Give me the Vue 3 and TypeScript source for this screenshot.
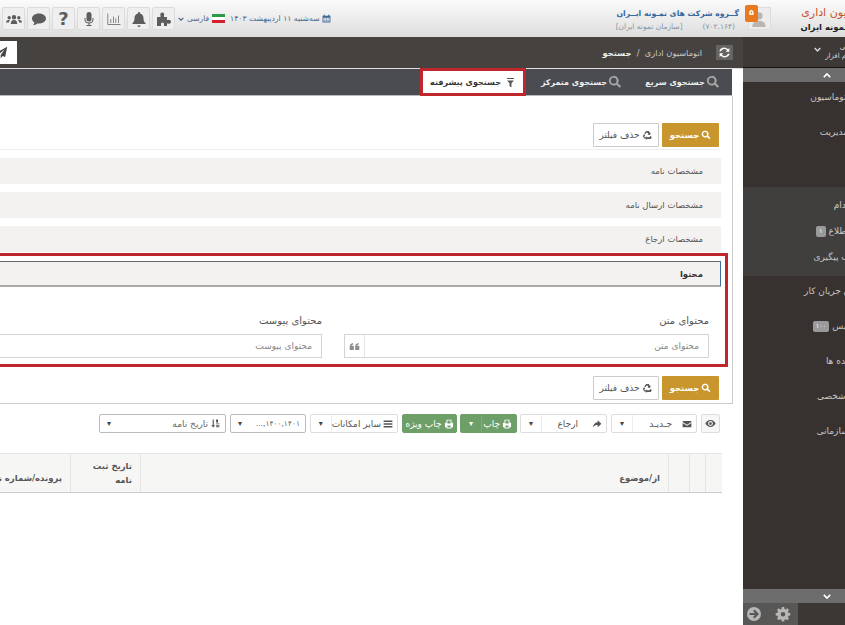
<template>
  <div class="page">
    <!-- Top header -->
    <header class="header">
      <div class="brand">
        <div class="brand-title">اتوماسیون اداری</div>
        <div class="brand-sub">گروه نمونه ایران</div>
      </div>
      <div class="avatar">
        <svg viewBox="0 0 16 16"><path :d="icons.user" /></svg>
        <span class="avatar-badge">۵</span>
      </div>
      <div class="company">
        <div class="company-name">گــروه شرکت های نمـونه ایــران</div>
        <div class="company-sub"><span>(۷۰۲.۱۶۴)</span><span>[سازمان نمونه ایران]</span></div>
      </div>
      <div class="header-left">
        <div class="date">
          <svg viewBox="0 0 16 16"><path :d="icons.calendar" /></svg>
          <span>سه‌شنبه ۱۱ اردیبهشت ۱۴۰۳</span>
        </div>
        <div class="flag"><i></i><i></i><i></i></div>
        <span class="lang">فارسی</span>
        <svg class="lang-caret" viewBox="0 0 10 6"><path d="M1 1l4 4 4-4" /></svg>
        <div class="tools">
          <button v-for="t in headerTools" :key="t" class="tool">
            <span v-if="t === 'question'" class="tool-q">?</span>
            <svg v-else viewBox="0 0 16 16"><path :d="icons[t]" /></svg>
          </button>
        </div>
      </div>
    </header>

    <div class="body">
      <!-- Sidebar -->
      <aside class="sidebar">
        <div class="side-top">
          <svg viewBox="0 0 10 6"><path d="M1 1l4 4 4-4" /></svg>
          <div class="side-user">
            <div>علی</div>
            <div>نرم افزار</div>
          </div>
        </div>
        <div class="side-scroll"><svg viewBox="0 0 10 6"><path d="M1 5l4-4 4 4" /></svg></div>
        <div class="side-group side-first">
          <div v-for="m in menuA" :key="m.label" class="side-row" :style="{ marginRight: -m.clip + 'px' }">{{ m.label }}</div>
        </div>
        <div class="side-group side-sub">
          <div v-for="m in menuB" :key="m.label" class="side-row side-row-sub" :style="{ marginRight: -m.clip + 'px' }">
            {{ m.label }}<span v-if="m.badge" class="side-badge">{{ m.badge }}</span>
          </div>
        </div>
        <div class="side-group side-last">
          <div v-for="m in menuC" :key="m.label" class="side-row" :style="{ marginRight: -m.clip + 'px' }">
            {{ m.label }}<span v-if="m.badge" class="side-badge">{{ m.badge }}</span>
          </div>
        </div>
        <div class="side-scroll"><svg viewBox="0 0 10 6"><path d="M1 1l4 4 4-4" /></svg></div>
        <div class="side-foot">
          <div class="foot-box">
            <svg viewBox="0 0 16 16"><path :d="icons.gear" /></svg>
            <svg viewBox="0 0 16 16"><path :d="icons.arrow" fill-rule="evenodd" /></svg>
          </div>
        </div>
      </aside>

      <main class="main">
        <div class="topbar">
          <div class="refresh"><svg viewBox="0 0 16 16"><path :d="icons.refresh" /></svg></div>
          <div class="crumbs">اتوماسیون اداری &nbsp;/&nbsp; <b>جستجو</b></div>
          <button class="send"><svg viewBox="0 0 16 16"><path :d="icons.plane" /></svg></button>
        </div>

        <nav class="tabs">
          <div class="tab tab-1"><svg viewBox="0 0 16 16"><path :d="icons.search" fill-rule="evenodd" /></svg>جستجوی سریع</div>
          <div class="tab tab-2"><svg viewBox="0 0 16 16"><path :d="icons.search" fill-rule="evenodd" /></svg>جستجوی متمرکز</div>
          <div class="tab tab-active"><svg viewBox="0 0 16 16"><path :d="icons.filter" /></svg>جستجوی پیشرفته</div>
        </nav>

        <section class="panel">
          <div class="actions actions-top">
            <button class="btn-search"><svg viewBox="0 0 16 16"><path :d="icons.search" fill-rule="evenodd" /></svg>جستجو</button>
            <button class="btn-clear"><svg viewBox="0 0 16 16"><path :d="icons.recycle" /></svg>حذف فیلتر</button>
          </div>

          <div class="accordion">
            <div v-for="r in sections" :key="r" class="acc-row">{{ r }}</div>
          </div>

          <div class="highlight">
            <div class="content-head">محتوا</div>
            <div class="fields">
              <div class="field">
                <label>محتوای متن</label>
                <div class="input">
                  <span class="ph">محتوای متن</span>
                  <span class="quote"><svg viewBox="0 0 16 16"><path :d="icons.quote" /></svg></span>
                </div>
              </div>
              <div class="field">
                <label>محتوای پیوست</label>
                <div class="input"><span class="ph">محتوای پیوست</span></div>
              </div>
            </div>
          </div>

          <div class="actions actions-bottom">
            <button class="btn-search"><svg viewBox="0 0 16 16"><path :d="icons.search" fill-rule="evenodd" /></svg>جستجو</button>
            <button class="btn-clear"><svg viewBox="0 0 16 16"><path :d="icons.recycle" /></svg>حذف فیلتر</button>
          </div>
        </section>

        <div class="toolbar">
          <button class="tb tb-eye"><svg viewBox="0 0 16 16"><path :d="icons.eye" fill-rule="evenodd" /></svg></button>
          <div class="tb tb-split tb-new">
            <span class="tb-main"><svg viewBox="0 0 16 16"><path :d="icons.mail" /></svg><em>جـدیـد</em></span>
            <span class="tb-caret">▾</span>
          </div>
          <div class="tb tb-split tb-refer">
            <span class="tb-main"><svg viewBox="0 0 16 16"><path :d="icons.share" /></svg><em>ارجاع</em></span>
            <span class="tb-caret">▾</span>
          </div>
          <div class="tb tb-split tb-green tb-print">
            <span class="tb-main"><svg viewBox="0 0 16 16"><path :d="icons.print" fill-rule="evenodd" /></svg>چاپ</span>
            <span class="tb-caret">▾</span>
          </div>
          <div class="tb tb-green tb-special">
            <svg viewBox="0 0 16 16"><path :d="icons.print" fill-rule="evenodd" /></svg>چاپ ویژه
          </div>
          <div class="tb tb-split tb-more">
            <span class="tb-main"><svg viewBox="0 0 16 16"><path :d="icons.bars" /></svg>سایر امکانات</span>
            <span class="tb-caret">▾</span>
          </div>
          <div class="tb tb-select tb-years">
            <span>۱۴۰۰,۱۴۰۱,...</span><span class="tb-arrow">▾</span>
          </div>
          <div class="tb tb-select tb-date">
            <span class="tb-date-label"><svg viewBox="0 0 16 16"><path :d="icons.sort" /></svg>تاریخ نامه</span><span class="tb-arrow">▾</span>
          </div>
        </div>

        <div class="table-head">
          <div class="th th-a"></div>
          <div class="th th-b"></div>
          <div class="th th-c"></div>
          <div class="th th-subject">از/موضوع</div>
          <div class="th th-date">تاریخ ثبت<br />نامه</div>
          <div class="th th-file">پرونده/شماره نامه</div>
        </div>
      </main>
    </div>
  </div>
</template>

<script setup lang="ts">
interface MenuItem {
  label: string
  clip: number
  badge?: string
}

const icons: Record<string, string> = {
  search: 'M6.5 1a5.5 5.5 0 1 0 3.2 10l3.5 3.7 1.9-1.9-3.7-3.5A5.5 5.5 0 0 0 6.5 1zm0 2.2a3.3 3.3 0 1 1 0 6.6 3.3 3.3 0 0 1 0-6.6z',
  filter: 'M3 1.5h10V3H3zM3 5h10L9.4 9v6L6.6 13.4V9z',
  users: 'M8 4a2.2 2.2 0 1 1 0 4.4A2.2 2.2 0 0 1 8 4zM3.2 5a1.7 1.7 0 1 1 0 3.4 1.7 1.7 0 0 1 0-3.4zm9.6 0a1.7 1.7 0 1 1 0 3.4 1.7 1.7 0 0 1 0-3.4zM4.8 13c0-2.4 1-4 3.2-4s3.2 1.6 3.2 4zM0 11.5C0 10 .9 9 2.5 9h1.4c-.6.8-.9 1.6-1 2.5zM16 11.5c0-1.5-.9-2.5-2.5-2.5h-1.4c.6.8.9 1.6 1 2.5z',
  comment: 'M8 2.5c3.9 0 7 2.2 7 5s-3.100 5-7 5c-.6 0-1.100 0-1.700-.1C5 13.500 3.500 14 2 14c.8-.8 1.300-1.600 1.400-2.600C1.900 10.500 1 9.100 1 7.500c0-2.800 3.100-5 7-5z',
  mic: 'M8 1a2.500 2.500 0 0 1 2.500 2.500V8a2.500 2.500 0 0 1-5 0V3.500A2.500 2.500 0 0 1 8 1zM3.500 7h1v1a3.500 3.500 0 0 0 7 0V7h1v1a4.500 4.500 0 0 1-4 4.500V14h2v1h-5v-1h2v-1.500a4.500 4.500 0 0 1-4-4.500z',
  chart: 'M1.500 2.500h.7V13h12.300v.7h-13zM4.500 8h.7v4h-.7zM7 5.500h.7V12H7zM9.500 7.500h.7V12h-.7zM12 4.500h.7V12H12z',
  bell: 'M8 1c.6 0 1 .4 1 1v.4c2.300.5 3.500 2.300 3.500 4.600 0 3 .8 4 2 5v1h-13v-1c1.200-1 2-2 2-5 0-2.300 1.200-4.100 3.500-4.600V2c0-.6.4-1 1-1zM6.500 14.500h3A1.500 1.500 0 0 1 8 16a1.500 1.500 0 0 1-1.500-1.500z',
  puzzle: 'M1 6h3.500V4.500a2 2 0 1 1 3.500 0V6h3v3h1a2 2 0 1 1 0 3.500h-1V15H8v-2a1.500 1.500 0 1 0-3 0v2H1z',
  calendar: 'M1 3h2V1.500h2V3h6V1.500h2V3h2v12H1zM2.500 6.500v7h11v-7zM4 8h2v1.500H4zM7 8h2v1.500H7zM10 8h2v1.500h-2zM4 10.500h2V12H4zM7 10.500h2V12H7zM10 10.500h2V12h-2z',
  user: 'M8 2a3.200 3.200 0 1 1 0 6.400A3.200 3.200 0 0 1 8 2zM2 15c0-3.500 2.500-5.500 6-5.500s6 2 6 5.500z',
  gear: 'M6.800 1h2.400l.3 1.900 1.200.5 1.600-1.100 1.700 1.700-1.100 1.600.5 1.200 1.900.3v2.400l-1.900.3-.5 1.200 1.100 1.600-1.700 1.700-1.600-1.100-1.200.5-.3 1.900H6.800l-.3-1.900-1.200-.5-1.600 1.100L2 12.600l1.100-1.600-.5-1.200L.7 9.500V7.100l1.900-.3.500-1.200L2 4l1.700-1.700 1.600 1.100 1.200-.5zM8 6a2.300 2.300 0 1 0 0 4.600A2.300 2.300 0 0 0 8 6z',
  arrow: 'M8 1a7 7 0 1 1 0 14A7 7 0 0 1 8 1zM8.500 3.500L7 5l2 2H3.500v2H9l-2 2 1.500 1.500L13 8z',
  refresh: 'M8 2c1.800 0 3.400.8 4.500 2L14 2.500V7H9.500l1.700-1.700A4.500 4.500 0 0 0 3.700 6.500H1.600A6.500 6.500 0 0 1 8 2zM2 9h4.500l-1.700 1.700a4.500 4.500 0 0 0 7.500-1.200h2.100A6.500 6.500 0 0 1 3.500 12L2 13.500z',
  plane: 'M15 1L1 8.500l4 1.500 7-6-5 7v4l2.500-2.800 3 1.300z',
  recycle: 'M6.200 1.500h3.600l1.800 3 1.200-.7-1.200 3.600-3.600-.8 1.200-.7-1.400-2.400H6.600L5.200 5.800 3.200 4.600zM2.700 6l2 1.200L3.400 9.500 5 12.500H3.400L1.300 9zM6.500 10.500V9l-2.400 2.800 2.400 2.700V13h6.100l1.700-3-2-1.200-1.400 1.700z',
  quote: 'M1 8.500C1 5.500 2.500 3.500 6 3v2C4.500 5.300 3.700 6 3.600 7H7v6H1zM9 8.500C9 5.500 10.500 3.500 14 3v2c-1.500.3-2.300 1-2.400 2H15v6H9z',
  eye: 'M8 3c3.500 0 6 2.500 7.500 5-1.500 2.500-4 5-7.500 5S2 10.500.5 8C2 5.500 4.500 3 8 3zm0 1.500a3.500 3.500 0 1 0 0 7 3.500 3.500 0 0 0 0-7zM8 6a2 2 0 1 1 0 4 2 2 0 0 1 0-4z',
  mail: 'M1 3h14v1.800L8 9 1 4.800zM1 6.500L8 10.700l7-4.200V13H1z',
  share: 'M9 2l6 5.500L9 13V9.500c-3 0-5.500.8-7.500 4 .3-4.500 3-8 7.500-8.500z',
  print: 'M4 1h8v5h2.500v7H12v2H4v-2H1.500V6H4zm1.500 1.500V7h5V2.500zM5.500 10.500v3h5v-3z',
  bars: 'M1 2.500h14v2.200H1zM1 6.900h14v2.200H1zM1 11.300h14v2.200H1z',
  sort: 'M3 1h2v10h2.500L4 15 .5 11H3zM9 1h3.500v5H9zM9 8h6v1.500H9zM9 10.500h6V12H9zM9 13h6v1.500H9z',
}

const headerTools = ['puzzle', 'bell', 'chart', 'mic', 'question', 'comment', 'users']

const menuA: MenuItem[] = [
  { label: 'اتوماسیون', clip: 4 },
  { label: 'مدیریت', clip: 3 },
]

const menuB: MenuItem[] = [
  { label: 'استخدام', clip: 20 },
  { label: 'اطلاع', clip: 4, badge: '۱' },
  { label: 'مکتوب پیگیری', clip: 22 },
]

const menuC: MenuItem[] = [
  { label: 'فرمان جریان کار', clip: 22 },
  { label: 'پیش نویس', clip: 28, badge: '۱۰۰' },
  { label: 'پرونده ها', clip: 15 },
  { label: 'بایگانی شخصی', clip: 29 },
  { label: 'بایگانی سازمانی', clip: 32 },
]

const sections = ['مشخصات نامه', 'مشخصات ارسال نامه', 'مشخصات ارجاع']
</script>

<style>
html,
body {
  margin: 0;
  background: #fff;
  overflow: hidden;
}
</style>

<style scoped>
.page {
  width: 845px;
  height: 625px;
  overflow: hidden;
  display: flex;
  flex-direction: column;
  direction: rtl;
  font-family: 'DejaVu Sans', sans-serif;
  font-size: 8.5px;
  color: #444;
  background: #fff;
}

button {
  font-family: inherit;
  padding: 0;
  margin: 0;
}

svg {
  fill: currentColor;
  display: block;
  flex: none;
}

/* Header */
.header {
  height: 37px;
  flex: none;
  display: flex;
  align-items: center;
  background: linear-gradient(#fbfbfb, #dddddd);
}

.brand {
  width: 74px;
  flex: none;
  white-space: nowrap;
  overflow: hidden;
  padding-top: 2px;
}

.brand-title {
  color: #c9502a;
  font-size: 11px;
  line-height: 14px;
  margin-right: -32px;
}

.brand-sub {
  color: #222;
  font-size: 8.5px;
  font-weight: bold;
  line-height: 14px;
  margin-right: -26px;
}

.avatar {
  position: relative;
  width: 23px;
  height: 23px;
  flex: none;
  box-sizing: border-box;
  border: 1px solid #ddd;
  background: #ececec;
  color: #b9b5b2;
  margin-left: 9px;
}

.avatar svg {
  width: 18px;
  height: 18px;
  margin: 2px;
}

.avatar-badge {
  position: absolute;
  top: -3px;
  right: 12px;
  width: 13px;
  height: 17px;
  background: #e8791e;
  color: #fff;
  font-size: 8px;
  font-weight: bold;
  text-align: center;
  line-height: 16px;
  border-radius: 2px;
}

.company {
  flex: none;
  white-space: nowrap;
  padding-top: 2px;
}

.company-name {
  color: #33689e;
  font-size: 7.7px;
  font-weight: bold;
  line-height: 15px;
}

.company-sub {
  display: flex;
  gap: 20px;
  color: #8593a6;
  font-size: 7.5px;
  line-height: 12px;
  padding-right: 4px;
}

.header-left {
  margin-right: auto;
  display: flex;
  align-items: center;
  height: 100%;
  color: #4c6a8c;
}

.date {
  display: flex;
  align-items: center;
  gap: 2px;
  font-size: 7.7px;
  white-space: nowrap;
  margin-left: 5px;
}

.date svg {
  width: 9px;
  height: 9px;
  color: #3e6796;
}

.flag {
  width: 13px;
  height: 10px;
  display: flex;
  flex-direction: column;
  flex: none;
  margin-left: 3px;
}

.flag i {
  flex: 1;
  background: #fff;
}

.flag i:first-child {
  background: #2c9a46;
}

.flag i:last-child {
  background: #d3202f;
}

.lang {
  font-size: 7.5px;
  color: #4c6a8c;
}

.lang-caret {
  width: 6px;
  height: 4px;
  fill: none;
  stroke: #4c6a8c;
  stroke-width: 2;
  margin: 0 3px 0 3px;
}

.tools {
  display: flex;
  gap: 2px;
  margin-left: 2px;
}

.tool {
  width: 23px;
  height: 23px;
  box-sizing: border-box;
  border: 1px solid #dcdcdc;
  border-radius: 2px;
  background: #efefef;
  color: #5d5d5d;
  display: flex;
  align-items: center;
  justify-content: center;
}

.tool svg {
  width: 16px;
  height: 16px;
}

.tool-q {
  font-size: 18px;
  font-weight: bold;
  line-height: 20px;
}

/* Body */
.body {
  flex: 1;
  min-height: 0;
  display: flex;
}

/* Sidebar */
.sidebar {
  width: 102px;
  flex: none;
  display: flex;
  flex-direction: column;
  background: #39342f;
  overflow: hidden;
  color: #c9c7c5;
  font-size: 9px;
}

.side-top {
  height: 31px;
  flex: none;
  box-sizing: border-box;
  border-bottom: 1px solid #161514;
  background: #3d3936;
  display: flex;
  align-items: center;
  gap: 4px;
  white-space: nowrap;
}

.side-top svg {
  order: 2;
  width: 7px;
  height: 5px;
  fill: none;
  stroke: #ddd;
  stroke-width: 2;
  margin-bottom: 6px;
}

.side-user {
  order: 1;
  font-size: 7px;
  line-height: 9px;
  margin-right: -7px;
  color: #d8d8d8;
}

.side-scroll {
  height: 14px;
  flex: none;
  background: #6d6d6d;
  display: flex;
  align-items: center;
  justify-content: center;
  padding-left: 66px;
}

.side-scroll svg {
  width: 8px;
  height: 5px;
  fill: none;
  stroke: #fff;
  stroke-width: 2;
}

.side-group {
  display: flex;
  flex-direction: column;
  white-space: nowrap;
}

.side-first {
  height: 105px;
  flex: none;
  gap: 5px;
  background: #37322f;
}

.side-sub {
  height: 89px;
  flex: none;
  padding-top: 5px;
  box-sizing: border-box;
  background: #413f3e;
}

.side-last {
  flex: 1;
  gap: 5px;
  background: #37322f;
}

.side-row {
  height: 30px;
  flex: none;
  display: flex;
  align-items: center;
}

.side-row-sub {
  height: 26px;
}

.side-badge {
  background: #9a9a9a;
  color: #fff;
  font-size: 6.5px;
  line-height: 11px;
  padding: 0 3px;
  border-radius: 2px;
  margin-right: 3px;
}

.side-foot {
  height: 22px;
  flex: none;
  background: #3a3735;
}

.foot-box {
  width: 55px;
  height: 100%;
  margin-right: 47px;
  background: #585756;
  color: #b6b6b6;
  display: flex;
  align-items: center;
  gap: 13px;
  padding-right: 7px;
  box-sizing: border-box;
}

.foot-box svg {
  width: 16px;
  height: 16px;
}

/* Main */
.main {
  flex: 1;
  min-width: 0;
  overflow: hidden;
  display: flex;
  flex-direction: column;
}

.topbar {
  height: 32px;
  flex: none;
  box-sizing: border-box;
  border-bottom: 1px solid #ddd;
  background: #454240;
  display: flex;
  align-items: center;
  color: #c8c6c4;
  padding-right: 10px;
}

.refresh {
  width: 17px;
  height: 15px;
  background: #666462;
  color: #fff;
  display: flex;
  align-items: center;
  justify-content: center;
  margin-left: 14px;
}

.refresh svg {
  width: 13px;
  height: 13px;
}

.crumbs {
  font-size: 8.3px;
  white-space: nowrap;
}

.crumbs b {
  color: #eee;
}

.send {
  width: 17px;
  height: 23px;
  margin-right: auto;
  background: #fff;
  border: 0;
  color: #444;
  display: flex;
  align-items: center;
  justify-content: flex-end;
  overflow: hidden;
}

.send svg {
  width: 13px;
  height: 13px;
  margin-left: -5px;
}

/* Tabs */
.tabs {
  height: 27px;
  flex: none;
  box-sizing: border-box;
  margin-right: 11px;
  background: #4a4c51;
  border-bottom: 1px solid #bbb;
  display: flex;
  align-items: stretch;
  color: #f0f0f0;
  font-size: 8px;
  font-weight: bold;
  white-space: nowrap;
}

.tab {
  display: flex;
  align-items: center;
  justify-content: center;
  gap: 1px;
  box-sizing: border-box;
}

.tab svg {
  width: 14px;
  height: 14px;
  color: #a3a3a3;
}

.tab-1 {
  width: 99px;
}

.tab-2 {
  width: 103px;
}

.tab-active {
  width: 106px;
  margin: -1px 4px -1px 0;
  border: 3px solid #c0272d;
  background: #fff;
  color: #333;
  gap: 4px;
}

.tab-active svg {
  width: 11px;
  height: 11px;
  color: #555;
}

/* Panel */
.panel {
  flex: none;
  height: 308px;
  box-sizing: border-box;
  margin-right: 10px;
  border-right: 1px solid #ccc;
  border-bottom: 1px solid #ccc;
  display: flex;
  flex-direction: column;
}

.actions {
  display: flex;
  height: 24px;
  flex: none;
  gap: 3px;
  margin-right: 13px;
}

.actions-top {
  margin-top: 27px;
}

.actions-bottom {
  margin-top: 9px;
}

.btn-search,
.btn-clear {
  display: flex;
  align-items: center;
  justify-content: center;
  gap: 2px;
  box-sizing: border-box;
  border-radius: 1px;
}

.btn-search {
  width: 57px;
  background: #c8962c;
  border: 0;
  color: #fff;
  font-size: 8.5px;
  font-weight: bold;
}

.btn-search svg {
  width: 10px;
  height: 10px;
}

.btn-clear {
  width: 66px;
  background: #fff;
  border: 1px solid #ccc;
  color: #555;
  font-size: 9px;
}

.btn-clear svg {
  width: 11px;
  height: 11px;
}

.accordion {
  margin: 2px 11px 0 0;
  padding-top: 8px;
  border-top: 1px solid #eee;
  display: flex;
  flex-direction: column;
  gap: 8px;
}

.acc-row {
  height: 26px;
  box-sizing: border-box;
  padding: 0 18px 1px 0;
  background: #f3f2f1;
  display: flex;
  align-items: center;
  color: #555;
}

.highlight {
  height: 114px;
  flex: none;
  box-sizing: border-box;
  margin: 1px 4px 0 0;
  border: 3px solid #c0272d;
  border-left: 0;
  padding: 5px 4px 0 0;
}

.content-head {
  height: 26px;
  box-sizing: border-box;
  background: #f3f2f1;
  border-top: 1px solid #666;
  border-right: 1px solid #3f6f9f;
  border-bottom: 2px solid #aaa;
  display: flex;
  align-items: center;
  padding: 0 17px 0 0;
  font-weight: bold;
  color: #333;
}

.fields {
  display: grid;
  grid-template-columns: 365px 365px;
  gap: 22px;
  margin: 27px 12px 0 0;
}

.field label {
  display: block;
  height: 20px;
  font-size: 10px;
  line-height: 14px;
  color: #555;
}

.input {
  height: 24px;
  box-sizing: border-box;
  border: 1px solid #d4d4d4;
  display: flex;
  align-items: center;
  justify-content: space-between;
  padding-right: 9px;
  color: #888;
  font-size: 9px;
}

.quote {
  width: 20px;
  height: 100%;
  display: flex;
  align-items: center;
  justify-content: center;
  box-sizing: border-box;
  border-right: 1px solid #e4e4e4;
  color: #8d8d8d;
}

.quote svg {
  width: 11px;
  height: 11px;
}

/* Toolbar */
.toolbar {
  display: flex;
  height: 19px;
  flex: none;
  gap: 4px;
  margin: 10px 23px 0 0;
  white-space: nowrap;
  font-size: 9px;
}

.tb {
  box-sizing: border-box;
  flex: none;
  display: flex;
  align-items: center;
  border: 1px solid #ddd;
  border-radius: 2px;
  background: #fff;
  color: #555;
}

.tb svg {
  width: 10px;
  height: 10px;
}

.tb-eye {
  width: 19px;
  justify-content: center;
  background: #f7f7f7;
}

.tb-eye svg {
  width: 11px;
  height: 11px;
}

.tb-new {
  width: 86px;
}

.tb-new em {
  margin-right: 8px;
}

.tb-refer {
  width: 87px;
  margin-left: -1px;
}

.tb-print {
  width: 57px;
}

.tb-special {
  width: 55px;
  margin-right: -1px;
  justify-content: center;
  gap: 2px;
}

.tb-more {
  width: 88px;
}

.tb-years {
  width: 76px;
  height: 19px;
  font-size: 7.5px;
}

.tb-date {
  width: 127px;
}

.tb-select {
  border-color: #bbb;
  justify-content: space-between;
  padding: 0 5px 0 7px;
  color: #666;
}

.tb-arrow {
  font-size: 8px;
  color: #444;
}

.tb-date-label {
  display: flex;
  align-items: center;
  gap: 3px;
}

.tb-date-label svg {
  width: 9px;
  height: 9px;
  color: #555;
}

.tb-split {
  align-items: stretch;
}

.tb-main {
  flex: 1;
  display: flex;
  align-items: center;
  gap: 2px;
  padding-right: 4px;
}

.tb-main em {
  font-style: normal;
}

.tb-refer em {
  margin-right: 12px;
}

.tb-caret {
  width: 20px;
  flex: none;
  display: flex;
  align-items: center;
  justify-content: center;
  border-right: 1px solid #eee;
  font-size: 8px;
  color: #444;
}

.tb-green {
  background: #6f9f69;
  border-color: #6f9f69;
  color: #fff;
}

.tb-green .tb-caret {
  border-right-color: #7fae79;
  color: #fff;
}

/* Table */
.table-head {
  height: 40px;
  flex: none;
  box-sizing: border-box;
  margin: 20px 21px 0 0;
  width: 722px;
  background: #f6f6f5;
  border-top: 1px solid #e6e6e6;
  border-bottom: 1px solid #ccc;
  display: flex;
  font-size: 8.5px;
  font-weight: bold;
  color: #555;
}

.th {
  flex: none;
  box-sizing: border-box;
  border-left: 1px solid #e5e5e5;
  height: 100%;
  white-space: nowrap;
}

.th-a {
  width: 17px;
}

.th-b {
  width: 16px;
}

.th-c {
  width: 21px;
}

.th-subject {
  width: 528px;
  display: flex;
  align-items: flex-end;
  padding: 0 8px 9px 0;
}

.th-date {
  width: 70px;
  padding: 5px 8px 0 0;
  line-height: 14px;
}

.th-file {
  width: 70px;
  border-left: 0;
  display: flex;
  align-items: flex-end;
  padding: 0 8px 9px 0;
}
</style>
